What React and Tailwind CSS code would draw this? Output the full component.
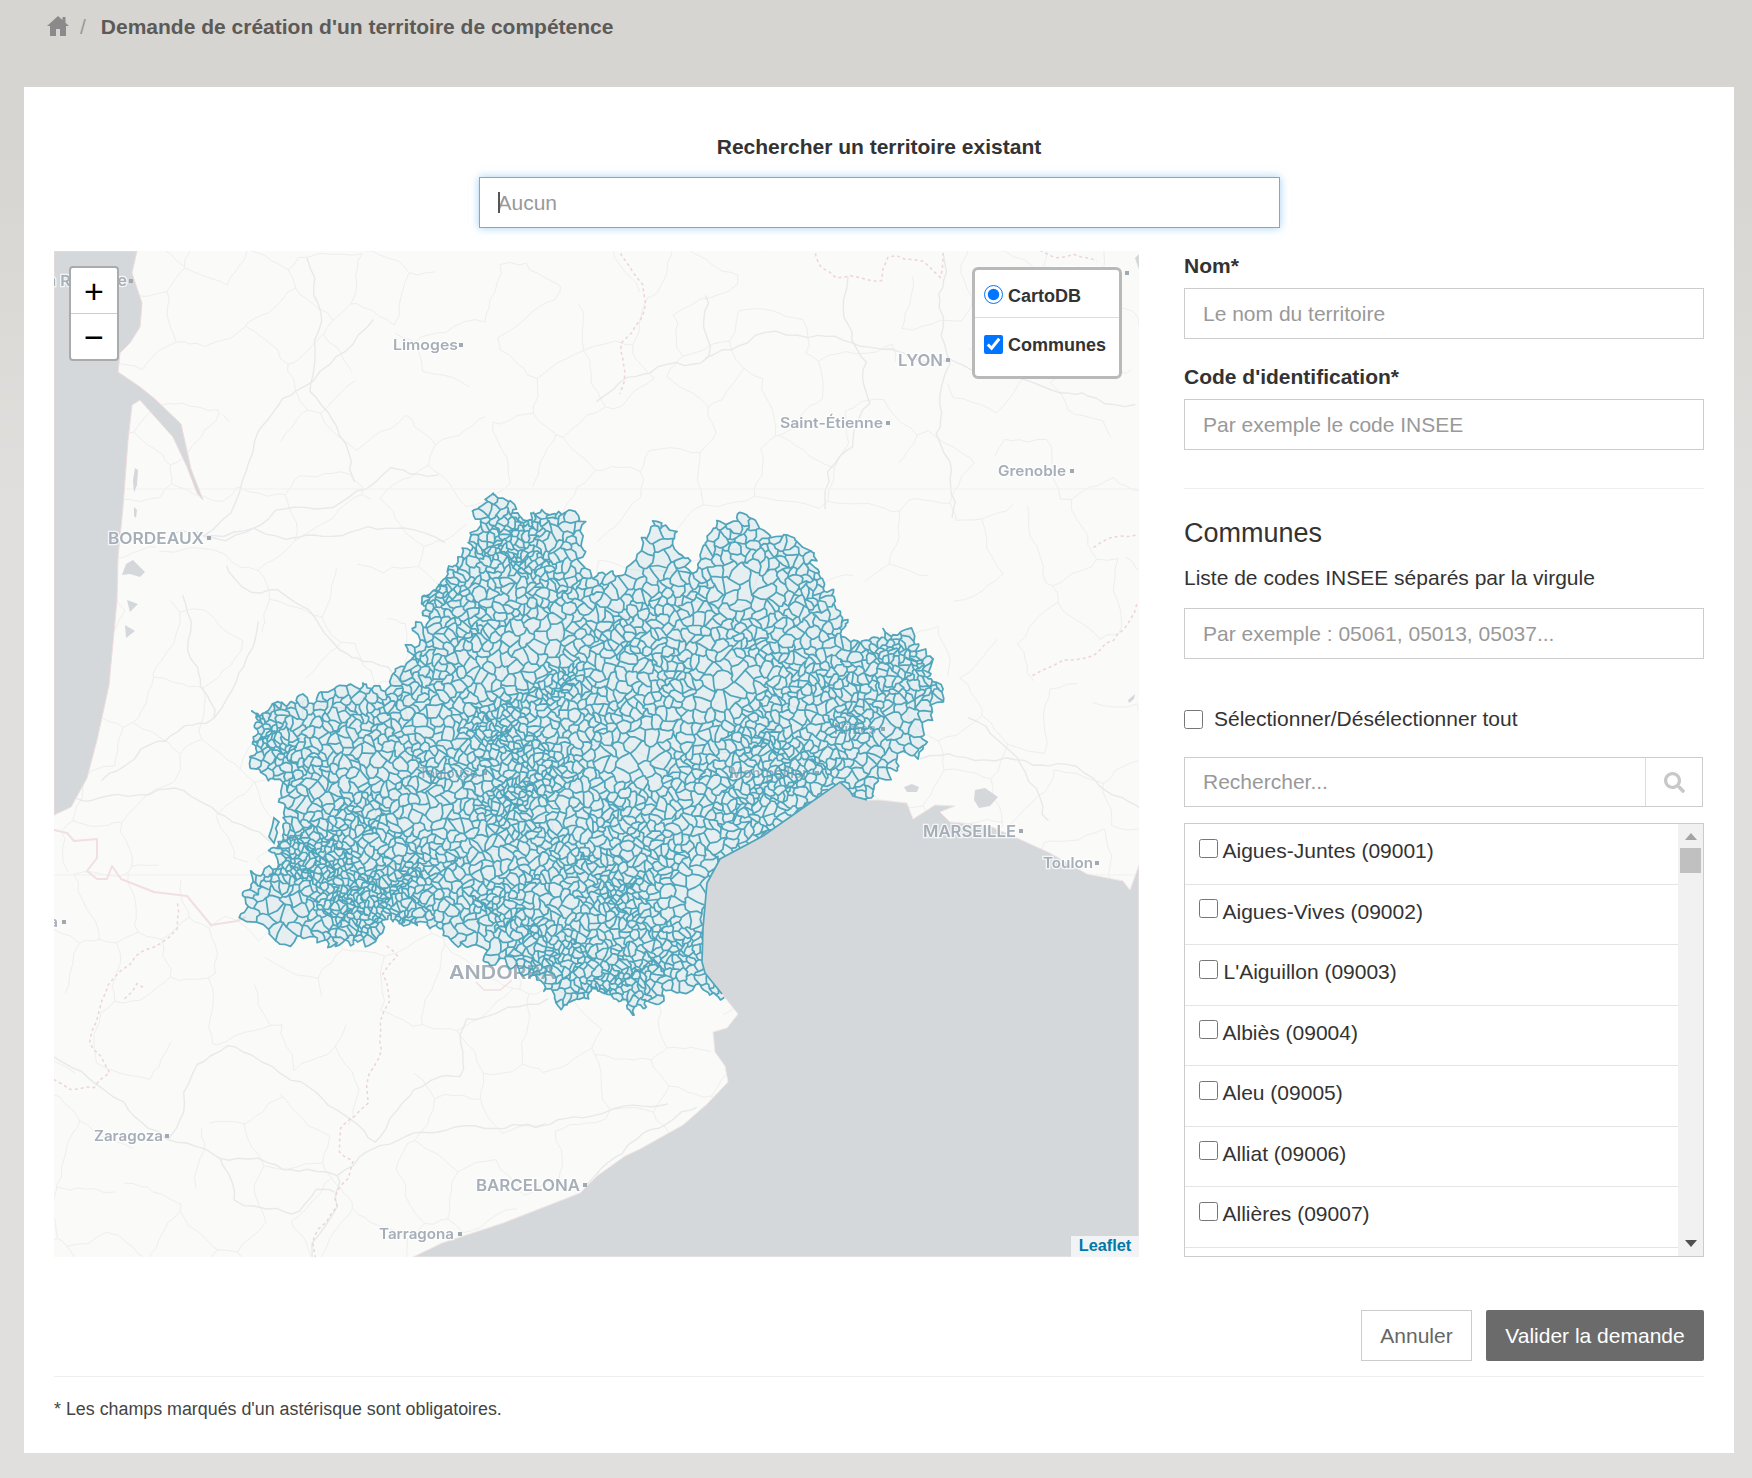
import React from "react";
import { FaSearch } from "react-icons/fa";

/* ---------- map drawing data (all in map-local pixels) ---------- */
const MW = 1085;
const MH = 1006;
const pg = (a) => a.map(([x, y]) => [x - 54, y - 251]);
const zm = (a) => a.map(([X, Y]) => [230 + X / 2.119 - 54, 480 + Y / 2.904 - 251]);
const poly = (a) => "M" + a.map((p) => p[0].toFixed(1) + " " + p[1].toFixed(1)).join("L");

function rng(seed) {
  let a = seed;
  return () => {
    a |= 0;
    a = (a + 0x6d2b79f5) | 0;
    let t = Math.imul(a ^ (a >>> 15), 1 | a);
    t = (t + Math.imul(t ^ (t >>> 7), 61 | t)) ^ t;
    return ((t ^ (t >>> 14)) >>> 0) / 4294967296;
  };
}

const regionZ = [
  [530,70],[565,50],[600,60],[630,115],[680,90],[720,88],[735,130],[752,185],[745,250],[765,268],[800,262],[840,270],
  [880,155],[915,110],[935,160],[965,195],[985,265],[1020,135],[1060,125],[1098,92],[1120,140],[1160,160],[1175,145],
  [1210,175],[1240,215],[1250,290],[1270,340],[1300,420],[1295,450],[1350,480],[1390,440],[1440,450],[1480,510],
  [1490,590],[1525,630],[1490,680],[1470,720],[1460,805],[1420,800],[1410,850],[1370,890],[1345,935],
  [1280,935],[1220,990],[1170,1060],[1120,1080],[1075,1120],[1050,1180],[1045,1250],[1040,1380],[1060,1430],[1060,1505],
  [1000,1470],[950,1480],[890,1530],[850,1535],[830,1500],[760,1480],[725,1525],[695,1520],[680,1470],[620,1420],
  [550,1390],[520,1350],[470,1335],[440,1290],[390,1290],[320,1270],[320,1345],[250,1340],[210,1355],[180,1320],
  [125,1350],[85,1320],[30,1260],[45,1160],[85,1120],[105,1060],[110,1000],[115,920],[100,860],[45,850],[50,790],
  [55,680],[115,640],[140,655],[200,620],[290,590],[330,610],[350,560],[380,530],[390,480],[380,440],[415,410],
  [410,330],[455,300],[465,260],[500,210],[510,170],[530,130],
];
const region = zm(regionZ);

const inside = (pts, x, y) => {
  let c = false;
  for (let i = 0, j = pts.length - 1; i < pts.length; j = i++) {
    const [xi, yi] = pts[i];
    const [xj, yj] = pts[j];
    if (yi > y !== yj > y && x < ((xj - xi) * (y - yi)) / (yj - yi) + xi) c = !c;
  }
  return c;
};

function cell(site, others, half) {
  let p = [
    [site[0] - half, site[1] - half],
    [site[0] + half, site[1] - half],
    [site[0] + half, site[1] + half],
    [site[0] - half, site[1] + half],
  ];
  for (const o of others) {
    const mx = (site[0] + o[0]) / 2;
    const my = (site[1] + o[1]) / 2;
    const nx = o[0] - site[0];
    const ny = o[1] - site[1];
    const out = [];
    for (let i = 0; i < p.length; i++) {
      const a = p[i];
      const b = p[(i + 1) % p.length];
      const da = (a[0] - mx) * nx + (a[1] - my) * ny;
      const db = (b[0] - mx) * nx + (b[1] - my) * ny;
      if (da <= 0) out.push(a);
      if (da < 0 !== db < 0) {
        const t = da / (da - db);
        out.push([a[0] + (b[0] - a[0]) * t, a[1] + (b[1] - a[1]) * t]);
      }
    }
    p = out;
    if (p.length < 3) break;
  }
  return p;
}

function darts(rand, x0, y0, x1, y1, radius, tries) {
  const B = 30;
  const grid = new Map();
  const sites = [];
  for (let k = 0; k < tries; k++) {
    const x = x0 + rand() * (x1 - x0);
    const y = y0 + rand() * (y1 - y0);
    const r = radius(x, y);
    const gx = Math.floor(x / B);
    const gy = Math.floor(y / B);
    let ok = true;
    const span = Math.ceil(r / B);
    for (let i = -span; i <= span && ok; i++)
      for (let j = -span; j <= span && ok; j++) {
        const arr = grid.get(gx + i + "," + (gy + j));
        if (!arr) continue;
        for (const s of arr) {
          if ((s[0] - x) ** 2 + (s[1] - y) ** 2 < r * r) {
            ok = false;
            break;
          }
        }
      }
    if (!ok) continue;
    const s = [x, y];
    sites.push(s);
    const key = gx + "," + gy;
    if (!grid.has(key)) grid.set(key, []);
    grid.get(key).push(s);
  }
  return sites;
}

function neighbours(sites, B) {
  const grid = new Map();
  sites.forEach((s) => {
    const key = Math.floor(s[0] / B) + "," + Math.floor(s[1] / B);
    if (!grid.has(key)) grid.set(key, []);
    grid.get(key).push(s);
  });
  return (s) => {
    const gx = Math.floor(s[0] / B);
    const gy = Math.floor(s[1] / B);
    const out = [];
    for (let i = -1; i <= 1; i++)
      for (let j = -1; j <= 1; j++) {
        const arr = grid.get(gx + i + "," + (gy + j));
        if (arr) for (const o of arr) if (o !== s) out.push(o);
      }
    out.sort((a, b) => (a[0] - s[0]) ** 2 + (a[1] - s[1]) ** 2 - (b[0] - s[0]) ** 2 - (b[1] - s[1]) ** 2);
    return out;
  };
}

const warp = (x, y) => [
  x + 2.4 * Math.sin(0.23 * y + 1.7 * Math.sin(0.11 * x)) + 1.3 * Math.sin(0.57 * y + 0.41 * x),
  y + 2.4 * Math.sin(0.19 * x + 1.9 * Math.sin(0.13 * y)) + 1.3 * Math.sin(0.53 * x - 0.37 * y),
];

const jag = (pts) => {
  const out = [];
  for (let i = 0; i < pts.length; i++) {
    const a = pts[i];
    const b = pts[(i + 1) % pts.length];
    out.push(a);
    const mx = (a[0] + b[0]) / 2;
    const my = (a[1] + b[1]) / 2;
    const len = Math.hypot(a[0] - b[0], a[1] - b[1]);
    const amp = Math.min(1.8, len * 0.24);
    out.push([mx + amp * Math.sin(mx * 1.37 + my * 2.11), my + amp * Math.sin(mx * 2.43 - my * 1.19)]);
  }
  return out;
};

const hot = zm([
  [200,1050],[170,1150],[290,1180],[260,1280],[1310,720],[690,600],[850,1400],[580,1310],[620,910],[1130,830],
  [560,770],[800,1150],[620,190],[450,350],[80,720],[400,1220],[720,1450],[1400,560],
]);
const sparse = zm([[60,1270],[1000,1180],[1400,720],[870,780],[630,510],[1050,600],[900,230],[1100,300],[130,1330],[500,1370]]);

const radiusMesh = (x, y) => {
  let r = 7.2 + 1.4 * Math.sin(0.05 * x + 2 * Math.sin(0.07 * y));
  for (const h of hot) {
    const d = (h[0] - x) ** 2 + (h[1] - y) ** 2;
    r -= 2.6 * Math.exp(-d / 1500);
  }
  for (const h of sparse) {
    const d = (h[0] - x) ** 2 + (h[1] - y) ** 2;
    r += 5.5 * Math.exp(-d / 700);
  }
  return Math.max(3.6, r);
};

function buildMesh() {
  const rand = rng(421);
  const sites = darts(rand, 150, 200, 920, 790, radiusMesh, 150000);
  const near = neighbours(sites, 30);
  let d = "";
  for (const s of sites) {
    if (!inside(region, s[0], s[1])) continue;
    const c = cell(s, near(s), 28);
    if (c.length < 3) continue;
    d += poly(jag(c.map((p) => warp(p[0], p[1])))) + "Z";
  }
  return d;
}

const wig = (x, y) => [
  x + 5 * Math.sin(0.037 * y + 1.3 * Math.sin(0.021 * x)) + 2.2 * Math.sin(0.13 * y + 0.07 * x) + 0.9 * Math.sin(0.41 * y),
  y + 5 * Math.sin(0.031 * x + 1.1 * Math.sin(0.027 * y)) + 2.2 * Math.sin(0.11 * x - 0.06 * y) + 0.9 * Math.sin(0.37 * x),
];
const wob = (pts, step = 9) => {
  const out = [];
  for (let i = 0; i < pts.length - 1; i++) {
    const a = pts[i];
    const b = pts[i + 1];
    const n = Math.max(1, Math.round(Math.hypot(a[0] - b[0], a[1] - b[1]) / step));
    for (let t = 0; t < n; t++) out.push(wig(a[0] + ((b[0] - a[0]) * t) / n, a[1] + ((b[1] - a[1]) * t) / n));
  }
  const l = pts[pts.length - 1];
  out.push(wig(l[0], l[1]));
  return out;
};

function buildRoads() {
  const rand = rng(77);
  const sites = darts(rand, -120, -120, MW + 120, MH + 120, () => 46, 12000);
  const near = neighbours(sites, 110);
  const seen = new Set();
  let d = "";
  for (const s of sites) {
    const c = cell(s, near(s), 105);
    for (let i = 0; i < c.length; i++) {
      const a = c[i];
      const b = c[(i + 1) % c.length];
      const key = Math.round((a[0] + b[0]) / 2) + "," + Math.round((a[1] + b[1]) / 2);
      if (seen.has(key)) continue;
      seen.add(key);
      if (rand() < 0.3) continue;
      d += poly(wob([a, b]));
    }
  }
  return d;
}

const MESH = buildMesh();
const ROADS = buildRoads();

const majorRoads = [
  [[176,537],[230,537],[253,527],[300,535],[353,537],[400,530],[447,537]],
  [[230,563],[253,590],[283,587],[310,603],[333,643],[363,657],[397,673]],
  [[210,537],[253,527],[273,505],[337,503],[387,473],[440,480]],
  [[210,537],[227,513],[257,440],[307,380],[373,327]],
  [[312,252],[315,310],[312,377],[340,420],[350,480]],
  [[54,1048],[95,1082],[166,1137],[217,1162],[332,1169],[376,1142],[462,1132],[544,1119],[666,1108]],
  [[166,1137],[185,1092],[229,1046],[307,1078],[372,1139],[409,1092],[462,1075],[470,1014],[544,1001]],
  [[848,278],[838,314],[862,361],[872,408],[852,451],[821,474],[824,511]],
  [[945,251],[934,311],[952,364],[938,431],[955,518]],
  [[710,354],[772,338],[859,341],[952,361],[1048,394],[1139,401]],
  [[600,401],[669,364],[714,354],[703,291]],
  [[973,720],[1027,782],[1050,823]],
  [[923,755],[990,765],[1073,762],[1139,810]],
  [[694,1108],[625,1149],[580,1186]],
  [[54,790],[87,795],[181,795],[237,830],[267,841]],
  [[221,722],[187,651],[181,600]],
  [[221,722],[144,748],[94,778]],
  [[221,722],[257,625]],
  [[217,1162],[235,1200],[290,1210],[310,1185],[332,1190]],
  [[332,1169],[340,1210],[315,1240],[320,1257]],
].map(pg);

const border = pg([
  [54,830],[67,833],[74,841],[97,839],[97,858],[87,871],[97,879],[107,879],[112,866],[121,879],[154,892],[187,896],[211,925],[237,921],[246,917],
]);
const andorra = pg([[476,982],[484,990],[500,990],[512,980]]);
const dashed = [
  [[181,902],[171,930],[131,955],[114,972],[101,1010],[96,1035],[109,1065],[94,1086],[71,1088],[54,1080]],
  [[126,997],[137,985],[144,991]],
  [[381,947],[391,960],[383,981],[391,1008],[381,1062],[369,1085],[366,1098],[336,1125],[336,1146],[348,1156],[336,1190],[340,1210],[315,1233],[323,1260]],
  [[620,253],[634,277],[643,310],[616,347],[629,370],[625,400]],
  [[817,251],[821,268],[834,278],[886,274],[890,254],[927,254],[936,274],[945,251]],
  [[1031,251],[1048,258],[1097,254]],
  [[1100,544],[1124,534],[1139,534]],
  [[1040,678],[1085,660],[1110,640],[1139,600]],
].map(pg);

const seaAtl = pg([
  [54,251],[137,251],[132,273],[142,303],[140,327],[130,343],[120,353],[118,372],[140,387],[155,399],[181,424],[191,469],
  [203,500],[197,493],[187,467],[173,437],[140,400],[132,405],[128,440],[123,507],[118,557],[117,600],[109,685],[97,740],
  [87,778],[71,807],[54,815],
]);
const coastRegion = pg([[867,800],[853,796],[850,791],[840,782],[810,803],[763,836],[720,859],[707,883],[703,928],[702,962],[705,973],[722,994]]);
const seaMed = [
  ...coastRegion,
  ...pg([[738,1014],[727,1028],[713,1032],[715,1052],[725,1066],[728,1082],[707,1104],[683,1125],[640,1149],[625,1156],[597,1176],[580,1193],[503,1223],[442,1243],[413,1257],
    [1139,1257],[1139,865],[1130,890],[1123,881],[1087,874],[1050,853],[1017,838],[990,826],[973,824],[950,822],[940,812],[955,806],[935,805],[913,819],[907,803],[880,800]]),
];
const lakes = [
  pg([[904,787],[912,784],[919,787],[917,792],[907,792]]),
  pg([[975,790],[985,788],[998,797],[990,806],[979,808],[974,800]]),
  pg([[122,575],[126,564],[133,560],[145,572],[140,577],[130,574]]),
  pg([[127,600],[138,604],[130,612]]),
  pg([[125,625],[135,631],[126,638]]),
  pg([[135,468],[138,470],[137,485],[134,493],[133,480]]),
  pg([[134,507],[137,510],[136,518],[134,516]]),
  pg([[1135,258],[1139,254],[1139,270]]),
  pg([[1128,700],[1135,694],[1134,699],[1129,703]]),
];
const enclave = [[660,515],[675,525],[665,540],[670,550],[660,575],[645,560],[655,535]].map(([X, Y]) => [X / 3, 349 + Y / 2.365]);

const under = [
  ["Toulouse", 419, 478, 773, 485, 14, 600],
  ["Montpellier", 730, 808, 773, 817, 14, 600],
  ["Nîmes", 834, 876, 729, 883, 14, 600],
  ["ANDORRA", 449, 556, 972, null, 19, 600],
];
const over = [
  ["La Rochelle", 38, 127, 281, 131, 15, 600],
  ["Limoges", 393, 458, 345, 461, 14.5, 600],
  ["LYON", 898, 943, 360, 948, 16, 600],
  ["Saint-Étienne", 780, 883, 423, 888, 14.5, 600],
  ["Grenoble", 998, 1066, 471, 1072, 14.5, 600],
  ["BORDEAUX", 108, 204, 538, 209, 16, 600],
  ["MARSEILLE", 923, 1016, 831, 1021, 16, 600],
  ["Toulon", 1043, 1093, 863, 1097, 14.5, 600],
  ["Zaragoza", 94, 163, 1136, 167, 14.5, 600],
  ["BARCELONA", 476, 580, 1185, 585, 16, 600],
  ["Tarragona", 379, 454, 1234, 460, 14.5, 600],
  ["Pamplona", -10, 58, 922, 64, 14.5, 600],
  ["GENEVA", 1048, 1120, 273, 1127, 16, 600],
];

function Labels({ items }) {
  return items.map(([t, x0, x1, yc, pin, size, w]) => (
    <g key={t}>
      <text
        x={x0 - 54}
        y={yc - 251 + size * 0.36}
        textLength={x1 - x0}
        lengthAdjust="spacingAndGlyphs"
        fontSize={size}
        fontWeight={w}
        fontFamily="Inter, sans-serif"
        fill="#a6aeb8"
        stroke="#ffffff"
        strokeOpacity="0.75"
        strokeWidth="2.5"
        paintOrder="stroke"
      >
        {t}
      </text>
      {pin !== null && <rect x={pin - 54 - 2} y={yc - 251 - 2} width="4" height="4" fill="#a0a8b2" />}
    </g>
  ));
}

function MapDrawing() {
  return (
    <svg width={MW} height={MH} viewBox={`0 0 ${MW} ${MH}`} className="block blur-[0.4px]">
      <rect width={MW} height={MH} fill="#fafaf9" />
      <path d={ROADS} fill="none" stroke="#eeeeed" strokeWidth="1" />
      {majorRoads.map((r, i) => (
        <path key={i} d={poly(wob(r))} fill="none" stroke="#e8e9ea" strokeWidth="1.4" strokeLinejoin="round" />
      ))}
      <path d={`M0 ${489 - 251}H${MW}M0 ${875 - 251}H${MW}`} stroke="#f1f1f0" strokeWidth="1" />
      <path d={poly(border)} fill="none" stroke="#f2dfe1" strokeWidth="2" strokeLinejoin="round" />
      <path d={poly(andorra)} fill="none" stroke="#f2dfe1" strokeWidth="1.5" />
      {dashed.map((r, i) => (
        <path key={i} d={poly(wob(r))} fill="none" stroke="#efd3d6" strokeWidth="1.5" strokeDasharray="3 3" />
      ))}
      <Labels items={under} />
      <path d={MESH} fill="#5aaabe" fillOpacity="0.13" stroke="#50a5bb" strokeWidth="1.75" strokeLinejoin="round" />
      <path d={poly(enclave) + "Z"} fill="#5aaabe" fillOpacity="0.13" stroke="#50a5bb" strokeWidth="1.75" />
      <path d={poly(seaAtl) + "Z"} fill="#d4d8db" stroke="#f0dcdc" strokeWidth="1" />
      <path d={poly(seaMed) + "Z"} fill="#d4d8db" stroke="#f3e6e6" strokeWidth="1" />
      <path d={poly(coastRegion)} fill="none" stroke="#50a5bb" strokeWidth="1.75" />
      {lakes.map((l, i) => (
        <path key={i} d={poly(l) + "Z"} fill="#d4d8db" />
      ))}
      <Labels items={over} />
    </svg>
  );
}

/* ---------- form ---------- */
const inputCls =
  "block w-full h-[51px] border border-[#cccccc] bg-white px-[18px] text-[21px] text-[#555555] placeholder:text-[#999999] outline-none";

const communes = [
  ["Aigues-Juntes (09001)", 0],
  ["Aigues-Vives (09002)", 0],
  ["L'Aiguillon (09003)", 1],
  ["Albiès (09004)", 0],
  ["Aleu (09005)", 0],
  ["Alliat (09006)", 0],
  ["Allières (09007)", 0],
];

export default function App() {
  return (
    <div className="min-h-screen bg-[#e0e0de] bg-[linear-gradient(#d6d5d1_0px,#d6d5d1_150px,#e0dfdd_500px)] pb-[25px] font-['Liberation_Sans',Arial,sans-serif] text-[#333333]">
      <header className="flex h-[87px] items-start gap-[11px] pl-[47px] pt-[15px]">
        <svg width="22" height="20" viewBox="0 0 22 20" className="mt-[1px] shrink-0" fill="#8a8a8a">
          <polygon points="11,0 15.5,4 15.5,1 18.5,1 18.5,6.7 22,10 19,10 19,20 13,20 13,13 9,13 9,20 3,20 3,10 0,10" />
        </svg>
        <span className="text-[21px] leading-[24px] text-[#999999]">/</span>
        <h1 className="ml-[4px] text-[21px] font-bold leading-[24px] text-[#5c5a58]">
          Demande de création d'un territoire de compétence
        </h1>
      </header>

      <main className="ml-[24px] mr-[18px] bg-white px-[30px] pb-[29px] pt-[45px]">
        <h2 className="text-center text-[21px] font-bold leading-[30px] text-[#333333]">
          Rechercher un territoire existant
        </h2>
        <div className="relative mx-auto mt-[15px] w-[801px]">
          <input
            className="block h-[51px] w-full border-[1.5px] border-[#66afe9] bg-white px-[18px] text-[21px] shadow-[0_0_8px_rgba(102,175,233,0.6)] outline-none placeholder:text-[#999999]"
            placeholder="Aucun"
          />
          <span className="absolute left-[19px] top-[15px] h-[21px] w-[2px] bg-[#555555]" />
        </div>

        <div className="mt-[23px] flex justify-between">
          <div className="relative h-[1006px] w-[1085px] overflow-hidden">
            <MapDrawing />

            <div className="absolute left-[15px] top-[15px] w-[50px] overflow-hidden rounded-[4px] border-[2.5px] border-[#a9abad] bg-white text-[#000000]">
              <div className="flex h-[46px] items-center justify-center border-b border-[#cccccc] text-[34px] leading-none">+</div>
              <div className="flex h-[45px] items-center justify-center text-[34px] leading-none">−</div>
            </div>

            <div className="absolute left-[918px] top-[16px] h-[112px] w-[150px] rounded-[6px] border-[3px] border-[#b9b9b9] bg-white text-[18px] font-bold text-[#333333]">
              <label className="flex h-[48px] items-center gap-[5px] border-b border-[#dddddd] pl-[9px] pt-[4px]">
                <input type="radio" defaultChecked className="m-0 mb-[3px] h-[19px] w-[19px]" />
                <span className="mt-[2px]">CartoDB</span>
              </label>
              <label className="flex h-[52px] items-center gap-[5px] pl-[9px]">
                <input type="checkbox" defaultChecked className="m-0 h-[19px] w-[19px]" />
                <span className="mt-[2px]">Communes</span>
              </label>
            </div>

            <div className="absolute bottom-0 right-0 flex h-[21px] w-[68px] items-center justify-center bg-[#f2f3f4] pb-[2px] text-[16.3px] font-bold text-[#0078a8]">
              Leaflet
            </div>
          </div>

          <div className="w-[520px]">
            <label className="block text-[21px] font-bold leading-[30px]">Nom*</label>
            <input className={`${inputCls} mt-[7px]`} placeholder="Le nom du territoire" />
            <label className="mt-[23px] block text-[21px] font-bold leading-[30px]">Code d'identification*</label>
            <input className={`${inputCls} mt-[7px]`} placeholder="Par exemple le code INSEE" />
            <hr className="mt-[38px] border-t-[1.5px] border-[#eeeeee]" />
            <h3 className="mt-[26px] text-[27px] font-normal leading-[36px]">Communes</h3>
            <p className="mt-[12px] text-[21px] leading-[30px]">Liste de codes INSEE séparés par la virgule</p>
            <input className={`${inputCls} mt-[15px]`} placeholder="Par exemple : 05061, 05013, 05037..." />

            <label className="mt-[45px] flex h-[30px] items-center gap-[11px] text-[21px]">
              <input type="checkbox" className="m-0 h-[19px] w-[19px]" />
              <span>Sélectionner/Désélectionner tout</span>
            </label>

            <div className="mt-[23px] flex h-[50px] w-[519px] border border-[#cccccc]">
              <input className="h-full min-w-0 flex-1 px-[18px] text-[21px] outline-none placeholder:text-[#999999]" placeholder="Rechercher..." />
              <div className="flex w-[57px] items-center justify-center border-l border-[#dddddd] text-[#c8c8c8]">
                <FaSearch size={21} />
              </div>
            </div>

            <div className="mt-[16px] flex h-[434px] overflow-hidden border-[1.5px] border-[#cccccc]">
              <ul className="min-w-0 flex-1">
                {communes.map(([name, shift]) => (
                  <li key={name} className="h-[60.5px] border-b-[1.5px] border-[#e4e4e4]">
                    <label className="flex h-full items-center gap-[4.5px] pb-[6px] pl-[14px] text-[21px]">
                      <input type="checkbox" className="m-0 mb-[5px] h-[19px] w-[19px]" />
                      <span className={shift ? "ml-[1px]" : ""}>{name}</span>
                    </label>
                  </li>
                ))}
              </ul>
              <div className="flex w-[25px] flex-col items-center bg-[#f1f1f1] pt-[9px]">
                <svg width="12" height="7" viewBox="0 0 12 7" className="shrink-0">
                  <polygon points="6,0 12,7 0,7" fill="#a3a3a3" />
                </svg>
                <div className="mt-[8px] h-[25px] w-[21px] bg-[#c0c0c0]" />
                <div className="flex-1" />
                <svg width="12" height="7" viewBox="0 0 12 7" className="mb-[9px] shrink-0">
                  <polygon points="0,0 12,0 6,7" fill="#505050" />
                </svg>
              </div>
            </div>
          </div>
        </div>

        <div className="mt-[53px] flex justify-end gap-[14px]">
          <button className="h-[51px] w-[111px] border border-[#cccccc] bg-white text-[21px] text-[#666666]">Annuler</button>
          <button className="h-[51px] w-[218px] rounded-[2px] bg-[#6b6b6b] text-[21px] text-white">Valider la demande</button>
        </div>
        <hr className="mt-[15px] border-t-[1.5px] border-[#eeeeee]" />
        <p className="mt-[17px] text-[17.85px] leading-[30px] text-[#444444]">
          * Les champs marqués d'un astérisque sont obligatoires.
        </p>
      </main>
    </div>
  );
}
